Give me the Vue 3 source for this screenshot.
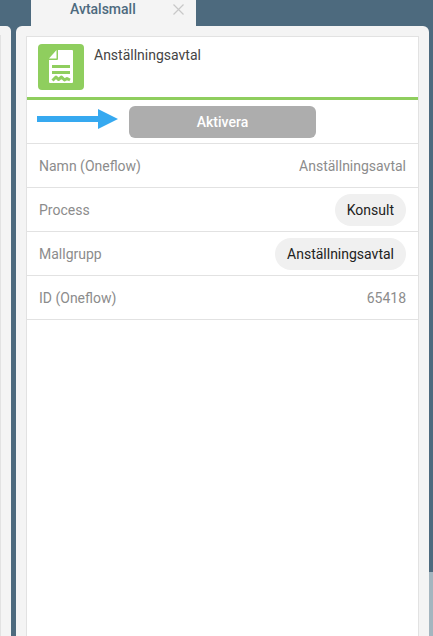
<script setup>
const rows = [
  { label: 'Namn (Oneflow)', value: 'Anställningsavtal', pill: false },
  { label: 'Process', value: 'Konsult', pill: true },
  { label: 'Mallgrupp', value: 'Anställningsavtal', pill: true },
  { label: 'ID (Oneflow)', value: '65418', pill: false },
]
</script>

<template>
  <div class="page">
    <aside class="side"><div class="side-inner"></div></aside>
    <main class="main">
      <div class="tabbar">
        <div class="tab">
          <span class="tab-title">Avtalsmall</span>
          <svg class="close" width="11" height="11" viewBox="0 0 11 11"><path d="M.5.5l10 10M10.500.5l-10 10" stroke="#c8c8c8" stroke-width="1.2" fill="none"/></svg>
        </div>
      </div>
      <div class="panel">
        <div class="card">
          <header class="head">
            <div class="logo">
              <svg width="46" height="46" viewBox="0 0 46 46">
                <path fill="#fff" d="M20 6h14a1 1 0 0 1 1 1v31a1 1 0 0 1-1 1H12a1 1 0 0 1-1-1V16h8a1 1 0 0 0 1-1z"/>
                <path fill="#fff" d="M18.500 6v8.500H11z"/>
                <path fill="#8fce5e" d="M14 21h18v3H14zM14 27h18v3H14z"/>
                <path fill="none" stroke="#8fce5e" stroke-width="3" stroke-linejoin="round" d="M14.500 36.500l3.500-3.500 2.500 2.500 3-2.500 3 3 2.500-1.500 3 1.500"/>
              </svg>
            </div>
            <span class="name">Anställningsavtal</span>
          </header>
          <div class="action">
            <svg class="arrow" width="81" height="20" viewBox="0 0 81 20">
              <path fill="#36a9f0" d="M0 7h61V0l20 10-20 10v-7H0z"/>
            </svg>
            <button class="activate">Aktivera</button>
          </div>
          <div v-for="r in rows" :key="r.label" class="row">
            <span class="label">{{ r.label }}</span>
            <span :class="r.pill ? 'pill' : 'value'">{{ r.value }}</span>
          </div>
        </div>
      </div>
    </main>
    <div class="edge"></div>
  </div>
</template>

<style>
html, body { margin: 0; background: #4d6a7e; }
</style>

<style scoped>
.page {
  width: 433px;
  height: 636px;
  overflow: hidden;
  background: #4d6a7e;
  display: flex;
  font-family: Roboto, "Liberation Sans", sans-serif;
}
.side {
  width: 11px;
  margin-top: 26px;
  padding-top: 9px;
  box-sizing: border-box;
  background: #f4f4f4;
  border-top-right-radius: 5px;
  flex: none;
  margin-right: 5px;
}
.side-inner {
  height: 100%;
  background: #e2e2e2;
  width: 1px;
}
.main { width: 413px; flex: none; display: flex; flex-direction: column; }
.edge {
  width: 4px;
  flex: none;
  margin-top: 572px;
  background: #a4b5bf;
}
.tabbar { height: 26px; padding-left: 15px; flex: none; }
.tab {
  width: 165px;
  height: 26px;
  background: #f4f4f4;
  display: flex;
  align-items: center;
}
.tab-title {
  margin-left: 39px;
  font-size: 14px;
  font-weight: 500;
  color: #4d6a7e;
  margin-top: -9px;
}
.close { margin-left: 37px; margin-top: -7px; }
.panel {
  flex: 1;
  background: #f4f4f4;
  border-radius: 6px 6px 0 0;
  padding: 10px 10px 0;
  min-height: 0;
}
.card {
  height: 100%;
  box-sizing: border-box;
  background: #fff;
  border: 1px solid #e2e2e2;
  border-bottom: 0;
}
.head {
  height: 63px;
  box-sizing: border-box;
  padding: 7px 11px 0;
  display: flex;
  gap: 10px;
  border-bottom: 3px solid #8fce5e;
}
.logo {
  width: 46px;
  height: 46px;
  background: #8fce5e;
  border-radius: 4px;
  flex: none;
}
.logo svg { display: block; }
.name { font-size: 14px; line-height: 22px; color: #444; }
.action {
  height: 44px;
  box-sizing: border-box;
  border-bottom: 1px solid #e2e2e2;
  display: flex;
  align-items: flex-start;
  padding: 6px 0 0 10px;
}
.arrow { flex: none; margin: 3px 11px 0 0; }
.activate {
  width: 187px;
  height: 32px;
  background: #adadad;
  color: #fff;
  font: 500 14px Roboto, "Liberation Sans", sans-serif;
  border: 0;
  border-radius: 6px;
  padding: 0;
}
.row {
  height: 44px;
  box-sizing: border-box;
  border-bottom: 1px solid #e2e2e2;
  display: flex;
  align-items: center;
  justify-content: space-between;
  padding: 0 12px;
  font-size: 14px;
}
.label, .value { color: #8c8c8c; }
.pill {
  height: 32px;
  line-height: 32px;
  padding: 0 12px;
  border-radius: 16px;
  background: #f0f0f0;
  color: #222;
}
</style>
